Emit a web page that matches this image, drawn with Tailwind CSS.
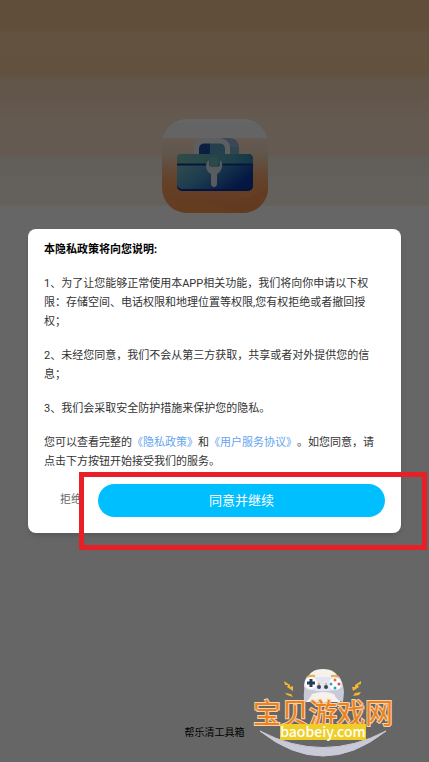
<!DOCTYPE html>
<html lang="zh-CN">
<head>
    <meta charset="UTF-8">
    <meta name="viewport" content="width=device-width, initial-scale=1.0">
    <title>帮乐清工具箱</title>
    <script src="https://cdn.jsdelivr.net/npm/@tailwindcss/browser@4"></script>
</head>
<body class="relative min-h-screen overflow-x-hidden bg-white font-['Roboto','Noto_Sans_CJK_SC',sans-serif]">
    <!-- Splash screen -->
    <div class="flex min-h-screen flex-col items-center justify-between bg-[linear-gradient(to_bottom,#f0c090_0px,#f0c293_28px,#f5cd9e_34px,#f5cb9b_75px,#f2d5b4_78px,#f2d7ba_99px,#fadac0_100px,#fae0c8_117px,#fae1cb_140px,#fae1cb_156px,#f3ece0_157px,#f5eee2_175px,#faf3e6_176px,#faf0e2_205px,#fff_206px)]">
        <svg class="mt-[119px] h-[94px] w-[106px]" viewBox="0 0 106 94" role="img" aria-label="工具箱">
            <defs>
                <linearGradient id="tile" x1="0" y1="0" x2="0" y2="1">
                    <stop offset="0.2" stop-color="#fbe3d0"/>
                    <stop offset="0.36" stop-color="#f2d8c0"/>
                    <stop offset="0.66" stop-color="#f9a266"/>
                    <stop offset="1" stop-color="#fa9650"/>
                </linearGradient>
                <linearGradient id="box" x1="0" y1="0" x2="1" y2="0.6">
                    <stop offset="0" stop-color="#8fc8c4"/>
                    <stop offset="0.5" stop-color="#4a9ac4"/>
                    <stop offset="1" stop-color="#0a3aa8"/>
                </linearGradient>
                <linearGradient id="lid" x1="0" y1="0" x2="1" y2="0">
                    <stop offset="0" stop-color="#78bdb2"/>
                    <stop offset="0.7" stop-color="#4fa6b8"/>
                    <stop offset="1" stop-color="#3288b8"/>
                </linearGradient>
                <clipPath id="round"><rect width="106" height="94" rx="25"/></clipPath>
            </defs>
            <g clip-path="url(#round)">
                <rect width="106" height="94" fill="url(#tile)"/>
                <rect width="106" height="19" fill="#fafafa"/>
                <rect width="106" height="4" fill="#fff"/>
                <path d="M38 79C51 86 63 91 82 94h24V68C88 82 65 84 38 79Z" fill="#ee8744" opacity=".35"/>
            </g>
            <path d="M60 19h7q10 0 10 10v8H60Z" fill="#9aaed6"/>
            <path d="M67 28h10v9H67Z" fill="#76b0c8"/>
            <rect x="37" y="24" width="11" height="13" fill="#254aa6"/>
            <rect x="48" y="24" width="16" height="13" fill="#5c9ec2"/>
            <path d="M34.500 36v-6q0-8 8-8h15q8 0 8 8v6" fill="none" stroke="#e8ebed" stroke-width="5"/>
            <rect x="15" y="35" width="76" height="37" rx="5" fill="#0b2e9c"/>
            <rect x="15" y="35" width="76" height="35" rx="5" fill="url(#box)"/>
            <path d="M15 45v-5q0-5 5-5h66q5 0 5 5v5Z" fill="url(#lid)"/>
            <path d="M15 45.500h30M60 45.500h31" stroke="#123b8b" stroke-width="2"/>
            <rect x="48" y="38" width="8" height="11" rx="2" fill="#66b7b8"/>
            <path d="M47 41v4q0 3 3 3h5q3 0 3-3v-4q3 3 2 7-1 5-5 7v9q0 4-3 4t-3-4v-9q-4-2-5-7 0-5 3-7Z" fill="#dfe4ea"/>
        </svg>
        <p class="mb-5 text-[10px] leading-[18px] text-black">帮乐清工具箱</p>
    </div>

    <!-- Privacy dialog -->
    <div class="absolute inset-0 flex items-center bg-black/60 px-7">
        <div role="dialog" aria-modal="true" aria-labelledby="privacy-title" class="w-full rounded-lg bg-white px-4 pt-[11px] pb-4 shadow-md">
            <div class="flex flex-col gap-[15px] text-[11px] leading-[19px] text-[#333] [text-spacing-trim:space-all]">
                <h1 id="privacy-title" class="font-bold text-black">本隐私政策将向您说明:</h1>
                <p>1、为了让您能够正常使用本APP相关功能，我们将向你申请以下权<br>限：存储空间、电话权限和地理位置等权限,您有权拒绝或者撤回授<br>权；</p>
                <p>2、未经您同意，我们不会从第三方获取，共享或者对外提供您的信<br>息；</p>
                <p>3、我们会采取安全防护措施来保护您的隐私。</p>
                <p>您可以查看完整的<a href="#privacy" class="text-[#64a5f0]">《隐私政策》</a>和<a href="#terms" class="text-[#64a5f0]">《用户服务协议》</a>。如您同意，请<br>点击下方按钮开始接受我们的服务。</p>
            </div>
            <div class="mt-[13px] flex h-[33px]">
                <button type="button" class="w-[54px] shrink-0 text-[11px] text-[#666]">拒绝</button>
                <button type="button" class="flex-1 rounded-full bg-[#00bfff] text-[13px] text-white">同意并继续</button>
            </div>
        </div>
    </div>

    <!-- Highlight around the agree button -->
    <div class="pointer-events-none absolute top-[472px] right-[2px] left-[79px] h-[78px] border-[5px] border-[#e81f27]"></div>

    <!-- Site watermark -->
    <div class="pointer-events-none absolute right-[29px] bottom-0 h-[102px] w-[155px]">
        <svg class="absolute inset-0 h-full w-full" viewBox="0 0 155 102" aria-hidden="true">
            <path d="M15 71Q78 121 141 71 78 104 15 71Z" fill="#c9cad8" stroke="#c9cad8"/>
            <path d="M61 22q3-13 17-13t17 13v20H61Z" fill="#f6f1ea"/>
            <path d="M62 17h32q4 4 5 15l-1 10q-6-1-9-8-11-4-22 0-3 7-8 8-1-15 3-25Z" fill="#c9cad8"/>
            <path d="M62 17h32q3 3 3 10-4 4-9 3l-4 1H72l-4-1q-5 1-9-3 0-7 3-10Z" fill="#e6e5ef"/>
            <ellipse cx="78" cy="38" rx="11" ry="5" fill="#f6f1ea"/>
            <path d="M62 17q3-2 8-1M86 16q5-1 8 1" fill="none" stroke="#e5ae48" stroke-width="2"/>
            <circle cx="66" cy="23" r="6" fill="#fff"/>
            <path d="M66 19v8M62 23h8" stroke="#243e56" stroke-width="3"/>
            <circle cx="90" cy="24" r="6" fill="#fff"/>
            <circle cx="90" cy="20" r="1.500" fill="#ef6548"/>
            <circle cx="94" cy="24" r="1.500" fill="#e54458"/>
            <circle cx="90" cy="28" r="1.500" fill="#279dc0"/>
            <circle cx="86" cy="24" r="1.500" fill="#25acc4"/>
            <circle cx="74" cy="27" r="2" fill="#31475c"/>
            <circle cx="81" cy="27" r="2" fill="#31475c"/>
            <path d="M73 24h2M80 24h2" stroke="#ed6960"/>
            <path d="M39 21l6 4 0 2 3-1 0 5-6-4 1-2-3 0ZM116 21l-6 4 0 2-3 0 1 4 6-4-1-2 3-1ZM40 33l6 1 2 3-6-2ZM116 32l-6 1-2 3 6-1Z" fill="#f4b72e"/>
        </svg>
        <p class="absolute top-[36px] left-[8px] font-['Noto_Sans_CJK_SC',sans-serif] text-[28px] leading-[32px] whitespace-nowrap text-[#ec8219] [-webkit-text-stroke:2px_#f6d3ae] [paint-order:stroke]">宝贝游戏网</p>
        <p class="absolute top-[64px] left-[35px] h-[16px] w-[86px] bg-[#efce27] text-center font-['Noto_Sans_CJK_SC',sans-serif] text-[14px] leading-[15px] font-medium text-white">baobeiy.com</p>
    </div>
</body>
</html>
